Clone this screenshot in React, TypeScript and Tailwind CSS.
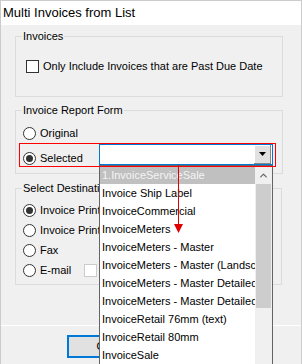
import { ChevronUp } from 'lucide-react';

const font = { fontFamily: '"Liberation Sans", Arial, sans-serif' };

const items = [
  '1.InvoiceServiceSale',
  'Invoice Ship Label',
  'InvoiceCommercial',
  'InvoiceMeters',
  'InvoiceMeters - Master',
  'InvoiceMeters - Master (Landscape)',
  'InvoiceMeters - Master Detailed',
  'InvoiceMeters - Master Detailed',
  'InvoiceRetail 76mm (text)',
  'InvoiceRetail 80mm',
  'InvoiceSale',
  'InvoiceService',
];

function Radio({ checked }: { checked?: boolean }) {
  return (
    <span className="flex h-[13px] w-[13px] shrink-0 items-center justify-center rounded-full border border-[#333] bg-white">
      {checked && <span className="h-[7px] w-[7px] rounded-full bg-[#333]" />}
    </span>
  );
}

function Check({ disabled }: { disabled?: boolean }) {
  return (
    <span
      className={`block h-[13px] w-[13px] shrink-0 border bg-white ${
        disabled ? 'border-[#cccccc]' : 'border-[#333]'
      }`}
    />
  );
}

function Legend({ children }: { children: string }) {
  return <legend className="ml-[-1px] h-[14px] px-[1px] leading-[14px]">{children}</legend>;
}

export default function App() {
  return (
    <div
      className="relative h-[364px] w-[302px] overflow-hidden border-x border-t border-[#cccccc] bg-[#f0f0f0] text-[11px] text-black"
      style={font}
    >
      <div className="flex h-[24px] items-center bg-white pl-[2px] text-[13px]">Multi Invoices from List</div>

      <div className="flex flex-col pl-[14px]">
        <fieldset className="mt-[4px] h-[68px] w-[268px] border border-[#dcdcdc] pl-[7px]">
          <Legend>Invoices</Legend>
          <label className="mt-[17px] flex items-center gap-[4px] pl-[3px]">
            <Check />
            <span className="leading-[13px]">Only Include Invoices that are Past Due Date</span>
          </label>
        </fieldset>

        <fieldset className="mt-[6px] h-[71px] w-[268px] border border-[#dcdcdc] pl-[7px]">
          <Legend>Invoice Report Form</Legend>
          <div className="mt-[8px] flex h-[17px] items-center gap-[4px]">
            <Radio />
            <span>Original</span>
          </div>
          <div className="mt-[2px] flex h-[21px] items-start">
            <div className="mt-[6px] flex w-[76px] items-center gap-[4px]">
              <Radio checked />
              <span>Selected</span>
            </div>
            <div className="flex h-[21px] w-[174px] items-center justify-end border border-[#0078d7] bg-white pr-px">
              <div className="flex h-[19px] w-[17px] items-center justify-center border-r border-b border-[#888] bg-[#e1e1e1] shadow-[inset_1px_1px_0_#fff]">
                <svg width="7" height="4" viewBox="0 0 7 4">
                  <path d="M0 0h7L3.5 4z" fill="#000" />
                </svg>
              </div>
            </div>
          </div>
        </fieldset>

        <fieldset className="mt-[7px] h-[104px] w-[267px] border border-[#dcdcdc] pl-[7px]">
          <Legend>Select Destination</Legend>
          <div className="mt-[5px] flex flex-col">
            <div className="flex h-[20px] items-center gap-[4px]">
              <Radio checked />
              <span>Invoice Print</span>
            </div>
            <div className="flex h-[20px] items-center gap-[4px]">
              <Radio />
              <span>Invoice Print</span>
            </div>
            <div className="flex h-[20px] items-center gap-[4px]">
              <Radio />
              <span>Fax</span>
            </div>
            <div className="flex h-[20px] items-center gap-[4px]">
              <Radio />
              <span className="w-[40px]">E-mail</span>
              <Check disabled />
              <span className="text-[#a0a0a0]">A</span>
            </div>
          </div>
        </fieldset>
      </div>

      <div className="mt-[40px] h-px w-full bg-white" />

      <div className="mt-[9px] flex pl-[66px]">
        <button className="flex h-[23px] w-[75px] items-center justify-center border-2 border-[#0078d7] bg-[#e1e1e1]">
          OK
        </button>
      </div>

      {/* dropdown list */}
      <div className="absolute left-[98px] top-[164px] flex h-[210px] w-[174px] border-x border-t border-[#646464] bg-white">
        <div className="flex min-w-0 flex-1 flex-col overflow-hidden">
          {items.map((it, i) => (
            <div
              key={i}
              className={`flex h-[18px] shrink-0 items-center overflow-hidden whitespace-nowrap pl-[2px] ${
                i === 0 ? 'bg-[#c0c0c0] text-[#f4f4f4]' : ''
              }`}
            >
              {it}
            </div>
          ))}
        </div>
        <div className="flex w-[17px] shrink-0 flex-col bg-[#f0f0f0]">
          <div className="flex h-[18px] items-center justify-center">
            <ChevronUp size={11} strokeWidth={2.5} color="#606060" />
          </div>
          <div className="mx-[1px] h-[124px] bg-[#cdcdcd]" />
        </div>
      </div>

      {/* red annotations */}
      <div className="pointer-events-none absolute left-[18px] top-[142px] h-[24px] w-[257px] border border-[#ff0000]" />
      <svg className="pointer-events-none absolute left-[172px] top-[164px]" width="11" height="70" viewBox="0 0 11 70">
        <line x1="5.5" y1="0" x2="5.5" y2="62" stroke="#e00000" strokeWidth="1" />
        <path d="M1 59h9l-4.5 9z" fill="#e00000" />
      </svg>
    </div>
  );
}
